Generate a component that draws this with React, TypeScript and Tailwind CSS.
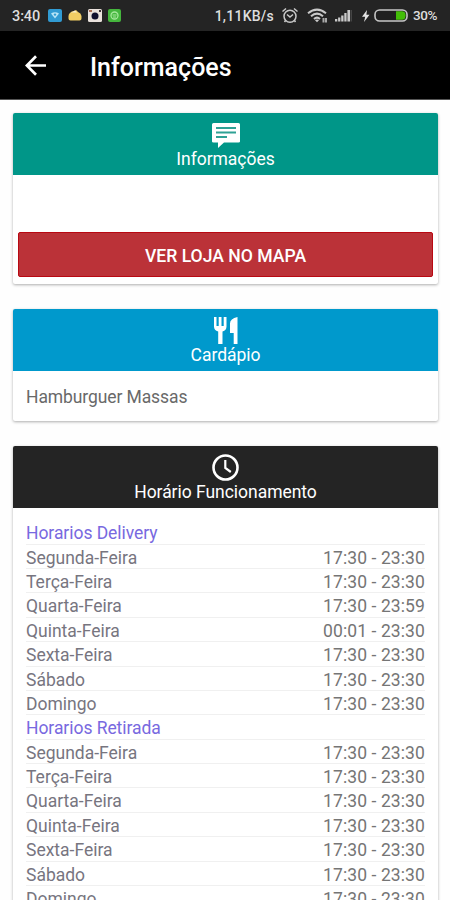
import type { ReactNode } from "react";

const days = ["Segunda-Feira", "Terça-Feira", "Quarta-Feira", "Quinta-Feira", "Sexta-Feira", "Sábado", "Domingo"];

const deliveryHours = ["17:30 - 23:30", "17:30 - 23:30", "17:30 - 23:59", "00:01 - 23:30", "17:30 - 23:30", "17:30 - 23:30", "17:30 - 23:30"];

const pickupHours = days.map(() => "17:30 - 23:30");

function StatusBar() {
  return (
    <div className="flex h-[31px] items-center bg-[#242424] pr-[12px] pl-[12px] text-[13px] leading-none font-medium text-[#dedede]">
      <span className="w-[36px] pt-[3px] text-[14.5px] tracking-[-0.1px] whitespace-nowrap">3:40</span>
      <svg className="h-[13px] w-[14px]" viewBox="0 0 14 13">
        <rect width="14" height="13" rx="2" fill="#319bd3" />
        <path d="M3 4.5Q7 1.8 11 4.5L7 9.5z" fill="#b9e5f7" />
        <circle cx="7" cy="5.6" r="1.2" fill="#319bd3" />
      </svg>
      <svg className="ml-[6px] h-[13px] w-[14px]" viewBox="0 0 14 13">
        <path d="M1 5Q3 2 6 2l2-1 2 2q3 1 3.5 4v2.5q0 2-2 2H2.5q-2 0-2-2V7z" fill="#f1cd63" />
        <path d="M3 3.5l4-2 2 2z" fill="#f7eed0" />
      </svg>
      <svg className="ml-[6px] h-[13px] w-[14px]" viewBox="0 0 14 13">
        <rect width="14" height="13" rx="1.5" fill="#e9e1dc" />
        <path d="M1 1h3v2H1z" fill="#a76c55" />
        <circle cx="7" cy="7" r="3.5" fill="#10102f" />
        <path d="M11 1h2v2h-2z" fill="#41363a" />
      </svg>
      <svg className="ml-[6px] h-[13px] w-[13px]" viewBox="0 0 13 13">
        <rect width="13" height="13" rx="2" fill="#45b63d" />
        <circle cx="6.5" cy="6.5" r="3.5" fill="none" stroke="#a5e79b" strokeWidth="1.3" />
        <path d="M4.5 6h4M5 8h3" stroke="#a5e79b" />
      </svg>
      <span className="ml-auto pt-px text-[14px] tracking-[0.25px]">1,11KB/s</span>
      <svg className="ml-[7px] h-[17px] w-[18px] shrink-0" viewBox="0 0 18 17" fill="none" stroke="#c9c9c9" strokeWidth="1.5">
        <circle cx="9" cy="9.2" r="6" />
        <path d="M1.5 4.5L5 1.5M13 1.5l3.5 3M6 7.5l3 2.5 3-2.5M4.5 13.5L3.5 15M13.5 13.5l1 1.5" />
      </svg>
      <svg className="ml-[8px] h-[16px] w-[21px] shrink-0" viewBox="0 0 21 16">
        <g fill="none" stroke="#c9c9c9" strokeWidth="2">
          <path d="M1 5.3Q10 -2 19 5.3" />
          <path d="M4 8.3Q10 3 16 8.3" />
          <path d="M7 11Q10 8.3 13 11" />
        </g>
        <path d="M8 12.2q2-1.5 4 0l-2 2z" fill="#c9c9c9" />
        <path d="M15.5 10h2v4.5h-2zM18 10h2v4.5h-2z" fill="#a8a8a8" />
      </svg>
      <svg className="ml-[7px] h-[13px] w-[17px] shrink-0" viewBox="0 0 17 13" fill="#c9c9c9">
        <path d="M0 10h2.3v2.5H0zM3.1 8.5h2.3v4H3.1zM6.2 6.5h2.3v6H6.2zM9.3 4h2.3v8.5H9.3zM12.4 1h2.7v11.5h-2.7z" />
        <path d="M16 1h.7v11.5H16z" fill="#555" />
      </svg>
      <svg className="ml-[10px] h-[12px] w-[8px] shrink-0" viewBox="0 0 8 12">
        <path d="M5 0L0 6.8h3.2L2 12l5.5-7.3H4.4z" fill="#e4e4e4" />
      </svg>
      <svg className="ml-[4px] h-[13px] w-[34px] shrink-0" viewBox="0 0 34 13">
        <rect x="1" y="1" width="32" height="11" rx="4.5" fill="#202020" stroke="#c6c6c6" strokeWidth="1.6" />
        <path d="M22 2.3h6q3.6 0 3.6 4.2t-3.6 4.2h-6z" fill="#43bd08" />
      </svg>
      <span className="ml-[5px] w-[25px] pt-px text-[13.5px] tracking-[-0.4px]">30%</span>
    </div>
  );
}

function Card({ title, icon, color, children }: { title: string; icon: ReactNode; color: string; children: ReactNode }) {
  return (
    <section className="overflow-hidden rounded-[2px] bg-white shadow-[0_1px_3px_rgba(0,0,0,0.32)]">
      <header className={`flex h-[62px] flex-col items-center text-white ${color}`}>
        <div className="flex h-[35px] items-end">{icon}</div>
        <h2 className="text-[17.5px] leading-[22px] tracking-[-0.03px]">{title}</h2>
      </header>
      {children}
    </section>
  );
}

function Hours({ title, hours }: { title: string; hours: string[] }) {
  return (
    <>
      <h3 className="h-[24.38px] border-b border-[#f0f0f0] tracking-[-0.05px] text-[#7869e0]">{title}</h3>
      {days.map((day, i) => (
        <div key={day} className="flex h-[24.38px] justify-between border-b border-[#f0f0f0]">
          <span className="text-[#77757f]">{day}</span>
          <span className="tracking-[0.1px]">{hours[i]}</span>
        </div>
      ))}
    </>
  );
}

export default function App() {
  return (
    <div className="h-[900px] w-[450px] overflow-hidden bg-[#fefefe] font-[Roboto,sans-serif]">
      <StatusBar />
      <header className="flex h-[69px] items-center border-b border-[#555] bg-black pl-[25px] text-white">
        <svg className="h-[21px] w-[22px]" viewBox="0 0 22 21" fill="none" stroke="white" strokeWidth="2.7">
          <path d="M21 10.5H2M11 1.2L1.8 10.5 11 19.8" />
        </svg>
        <h1 className="ml-[43px] pt-[5px] text-[25px] leading-[30px] font-medium">Informações</h1>
      </header>
      <main className="flex flex-col gap-[25px] pt-[13px] pr-[12px] pl-[13px]">
        <Card
          title="Informações"
          color="bg-[#009688]"
          icon={
            <svg className="h-[25px] w-[28px]" viewBox="0 0 28 25">
              <path d="M1.5 0h25Q28 0 28 1.5v17q0 1-1.5 1H12L6 25v-5.5H1.5Q0 19.5 0 18.5v-17Q0 0 1.5 0z" fill="white" />
              <path d="M4 5h20M4 9.5h20M4 14h11" stroke="#2fa195" strokeWidth="2" />
            </svg>
          }
        >
          <div className="px-[5px] pt-[57px] pb-[7px]">
            <button className="h-[45px] w-full rounded-[2px] border border-[#b90812] bg-[#bb3238] pt-[2px] text-[17.6px] leading-[20px] font-medium text-white">VER LOJA NO MAPA</button>
          </div>
        </Card>
        <Card
          title="Cardápio"
          color="bg-[#0099cc]"
          icon={
            <svg className="h-[27px] w-[26px]" viewBox="0 0 26 27" fill="white">
              <path d="M1 0h2.5v9h2.2V0h2.8v9h2.2V0H13.5v9.5q0 4-4 5V27H5.2V14.5Q1 13.5 1 9.5zM24.5 0v27h-3.8V16H17V6.5Q17 1.5 24.5 0z" />
            </svg>
          }
        >
          <p className="h-[49.5px] pt-[16px] pl-[13px] text-[17.5px] leading-[21px] tracking-[-0.1px] text-[#696969]">Hamburguer Massas</p>
        </Card>
        <Card
          title="Horário Funcionamento"
          color="bg-[#242424]"
          icon={
            <svg className="h-[27px] w-[27px]" viewBox="0 0 27 27" fill="none" stroke="white">
              <circle cx="13.5" cy="13.5" r="12" strokeWidth="2.6" />
              <path d="M13.3 6v8l5.5 4" strokeWidth="2.2" />
            </svg>
          }
        >
          <div className="pt-[12.8px] pr-[13px] pb-4 pl-[13px] text-[17.5px] leading-[27px] text-[#757575]">
            <Hours title="Horarios Delivery" hours={deliveryHours} />
            <Hours title="Horarios Retirada" hours={pickupHours} />
          </div>
        </Card>
      </main>
    </div>
  );
}
